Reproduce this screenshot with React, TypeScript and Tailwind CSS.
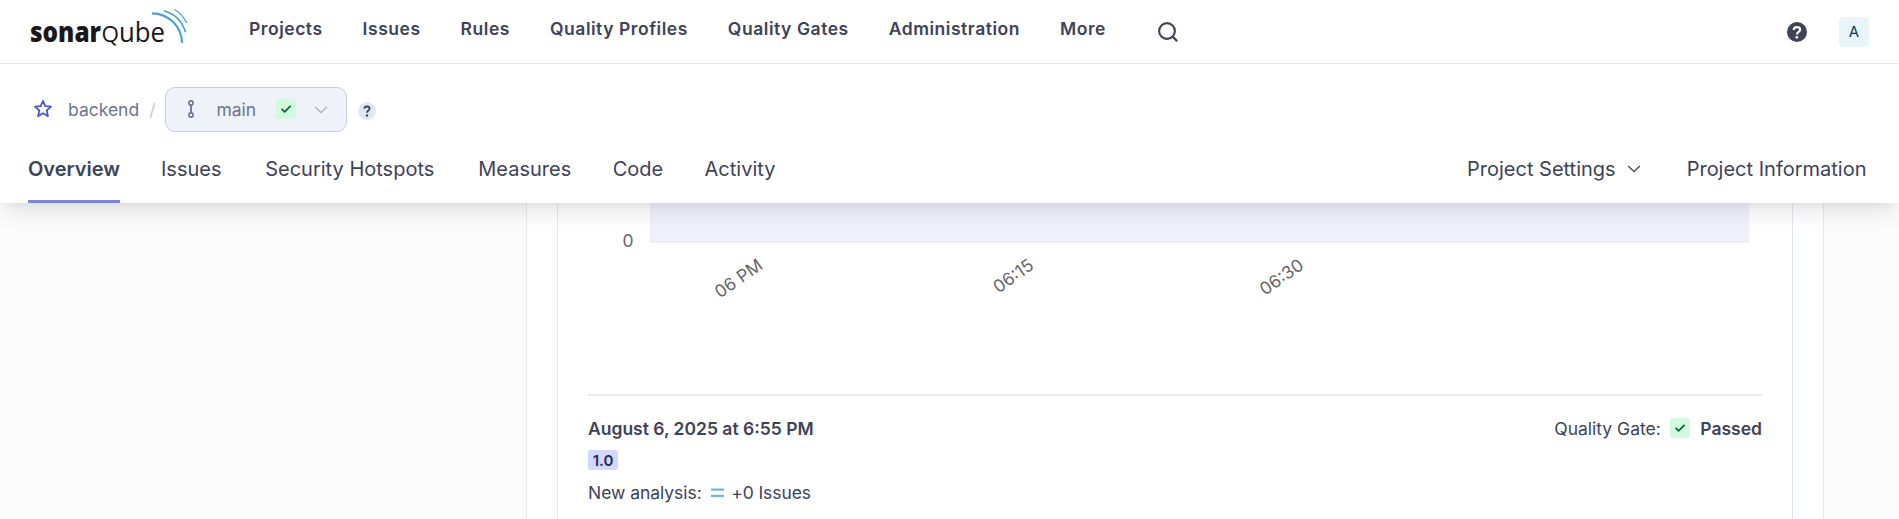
import type { ReactNode } from "react";

const NAV_ITEMS = [
  "Projects",
  "Issues",
  "Rules",
  "Quality Profiles",
  "Quality Gates",
  "Administration",
  "More",
];

const TABS = [
  { label: "Issues", width: "w-[62.5px]" },
  { label: "Security Hotspots", width: "w-[174.5px]" },
  { label: "Measures", width: "w-[95.5px]" },
  { label: "Code", width: "w-[51px]" },
  { label: "Activity", width: "w-[73px]" },
];

const TICKS = [
  { label: "06 PM", x: 764, y: 268 },
  { label: "06:15", x: 1035, y: 268 },
  { label: "06:30", x: 1305, y: 268 },
];

function Logo() {
  return (
    <svg width="162" height="44" viewBox="28 6 162 44" role="img" aria-label="sonarqube">
      <g fill="#1b171b" fontFamily="Open Sans, sans-serif">
        <text x="30" y="42.2" fontSize="27.5" fontWeight="800" textLength="71" lengthAdjust="spacingAndGlyphs">
          sonar
        </text>
        <text x="101.5" y="42.2" fontSize="21.5" fontWeight="500" textLength="17.5" lengthAdjust="spacingAndGlyphs">
          Q
        </text>
        <text x="119" y="42.2" fontSize="28" fontWeight="400" textLength="46" lengthAdjust="spacingAndGlyphs">
          ube
        </text>
      </g>
      <g fill="none" stroke="#4b9fd5">
        <path d="M152 13.4C168.5 13.6 182 26.5 182 43" strokeWidth="2.1" />
        <path d="M164 10.8C174.5 14 182.5 21.8 185.4 32.2" strokeWidth="1.7" />
        <path d="M174.4 9.5C179.7 12.5 184 17.2 186.5 23" strokeWidth="1.3" />
      </g>
    </svg>
  );
}

function QualityCheck() {
  return (
    <span className="flex size-5 items-center justify-center rounded-[3px] bg-[#d1fadf]">
      <svg width="20" height="20" viewBox="0 0 20 20" fill="none" stroke="#05603a" strokeWidth="1.6">
        <path d="M5.6 9.9L8.6 12.9L14.6 6.9" />
      </svg>
    </span>
  );
}

function Chevron({ className }: { className: string }) {
  return (
    <svg className={className} width="14" height="8" viewBox="0 0 14 8" fill="none" stroke="currentColor" strokeWidth="1.3">
      <path d="M1.2 1L7 6.6L12.8 1" />
    </svg>
  );
}

function TopBar() {
  return (
    <div className="flex h-16 shrink-0 items-start border-b border-[#e6e6e6] pl-7 pr-[30px]">
      <div className="mt-1.5">
        <Logo />
      </div>
      <nav className="ml-[59px] mt-4 flex gap-10 text-[17.5px] leading-[25px] font-semibold tracking-[0.54px]">
        {NAV_ITEMS.map((item) => (
          <a key={item}>{item}</a>
        ))}
      </nav>
      <svg className="ml-[51px] mt-[21px]" width="22" height="22" viewBox="0 0 22 22" fill="none" stroke="currentColor" strokeWidth="2.1">
        <circle cx="10" cy="10" r="7.9" />
        <path d="M15.4 15.4L20.2 20.2" strokeWidth="2.3" />
      </svg>
      <svg className="ml-auto mt-[22px]" width="20" height="20" viewBox="0 0 20 20">
        <circle cx="10" cy="10" r="10" fill="#3e4357" />
        <path d="M6.7 8C6.8 6 8.2 5.1 10 5.1C12 5.1 13.2 6.2 13.2 7.7C13.2 9.9 10 10 10 12.4" fill="none" stroke="#fff" strokeWidth="2.1" />
        <circle cx="9.8" cy="15.3" r="1.4" fill="#fff" />
      </svg>
      <span className="ml-8 mt-[17px] flex size-[30px] items-center justify-center rounded-[4px] bg-[#e9f4fb] text-[15px] text-[#0a3a5c]">
        A
      </span>
    </div>
  );
}

function Breadcrumb() {
  return (
    <div className="mt-[23px] flex h-[45px] items-center pl-[33px] text-[17.5px] text-[#6a7590]">
      <svg className="-mt-0.5" width="20" height="20" viewBox="0 0 20 20" fill="none" stroke="#4b56c9" strokeWidth="1.8" strokeLinejoin="round">
        <path d="M10 1.9L12.3 7.1L18 7.7L13.7 11.5L14.95 17.2L10 14.2L5.05 17.2L6.3 11.5L2 7.7L7.7 7.1Z" />
      </svg>
      <span className="mt-0.5 ml-[15px]">backend</span>
      <span className="mt-0.5 ml-2.5 text-[#c6c9d2]">/</span>
      <button className="ml-[9.4px] flex h-[45px] w-[182px] items-center rounded-[10px] border border-[#c5cddf] bg-[#eff2f9] pl-[18.5px]">
        <svg className="-mt-px" width="16" height="20" viewBox="0 0 16 20" fill="none" stroke="#6a7590" strokeWidth="1.6">
          <circle cx="7" cy="4" r="2.1" />
          <circle cx="7" cy="16" r="2.1" />
          <path d="M7 6.1V13.9" strokeWidth="1.9" />
        </svg>
        <span className="mt-0.5 ml-4">main</span>
        <span className="-mt-0.5 ml-[19.5px]">
          <QualityCheck />
        </span>
        <Chevron className="ml-[18px] text-[#a6adc0]" />
      </button>
      <span className="mt-0.5 ml-[11px] flex size-[18px] items-center justify-center rounded-full bg-[#e1e6f3]">
        <svg width="18" height="18" viewBox="0 0 18 18">
          <path d="M6.3 6.7C6.5 5.2 7.5 4.5 9 4.5C10.6 4.5 11.6 5.4 11.6 6.6C11.6 8.5 9 8.6 9 10.8" fill="none" stroke="#3e4357" strokeWidth="1.9" />
          <circle cx="9" cy="13.5" r="1.2" fill="#3e4357" />
        </svg>
      </span>
    </div>
  );
}

function Tab({ children, className }: { children: ReactNode; className: string }) {
  return <a className={`flex justify-center whitespace-nowrap ${className}`}>{children}</a>;
}

function TabBar() {
  return (
    <div className="mt-6 flex h-[47px] items-start gap-10 pl-7 pr-[32.5px] text-xl leading-[26px]">
      <Tab className="h-full w-[92px] border-b-[3px] border-[#7b87d9] font-semibold">Overview</Tab>
      {TABS.map((tab) => (
        <Tab key={tab.label} className={tab.width}>
          {tab.label}
        </Tab>
      ))}
      <Tab className="ml-auto items-center">
        Project Settings
        <Chevron className="ml-[11px]" />
      </Tab>
      <Tab className="ml-1.5">Project Information</Tab>
    </div>
  );
}

function ActivityChart() {
  return (
    <svg className="block" width="1174" height="191" viewBox="588 203 1174 191" fontFamily="Inter, sans-serif" fontSize="17.5" fill="#666">
      <rect x="650" y="203" width="1099" height="38.5" fill="#f1f1fc" />
      <rect x="650" y="241" width="1099" height="1.7" fill="#ebebeb" />
      <text x="633.5" y="247" textAnchor="end">
        0
      </text>
      {TICKS.map((tick) => (
        <text key={tick.label} x={tick.x} y={tick.y} textAnchor="end" transform={`rotate(-35, ${tick.x}, ${tick.y})`}>
          {tick.label}
        </text>
      ))}
    </svg>
  );
}

function Analysis() {
  return (
    <div className="border-t-2 border-[#ebebeb] pt-5 text-[17.5px] leading-[25px]">
      <div className="flex items-center">
        <h3 className="font-semibold">August 6, 2025 at 6:55 PM</h3>
        <span className="mr-[9.5px] ml-auto">Quality Gate:</span>
        <span className="-mt-px">
          <QualityCheck />
        </span>
        <strong className="ml-2.5 font-semibold">Passed</strong>
      </div>
      <span className="mt-[9px] flex h-5 w-[30px] items-center justify-center rounded-[3px] bg-[#d2d8ff] text-[15px] font-semibold text-[#222a5c]">
        1.0
      </span>
      <div className="mt-2.5 flex items-center">
        <span className="tracking-[-0.04px]">New analysis:</span>
        <svg className="mr-[7px] ml-[9.5px]" width="13" height="10" viewBox="0 0 13 10" fill="#6cb9e8">
          <rect y="0.5" width="13" height="2.3" rx="0.5" />
          <rect y="6.7" width="13" height="2.3" rx="0.5" />
        </svg>
        <span className="tracking-[-0.08px]">+0 Issues</span>
      </div>
    </div>
  );
}

export default function App() {
  return (
    <div className="flex h-[519px] flex-col overflow-hidden bg-[#fcfcfc] font-['Inter',sans-serif] text-[#3e4357]">
      <header className="relative z-10 flex h-[203px] shrink-0 flex-col bg-white shadow-[0_15px_20px_-5px_rgba(29,33,47,0.1),0_5px_7.5px_-2.5px_rgba(29,33,47,0.05)]">
        <TopBar />
        <Breadcrumb />
        <TabBar />
      </header>
      <main className="mr-[75px] ml-[526px] flex min-w-0 flex-1 border-x border-[#e9e9ea] bg-white px-[30px]">
        <section className="min-w-0 flex-1 border-x border-[#e1e6f3] px-[30px]">
          <ActivityChart />
          <Analysis />
        </section>
      </main>
    </div>
  );
}
